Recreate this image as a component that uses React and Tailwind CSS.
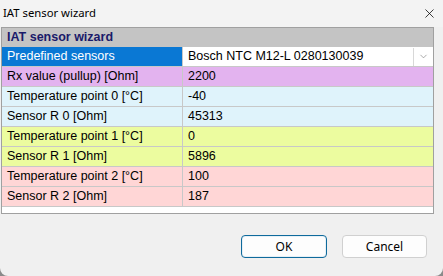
import { ChevronDown, X } from 'lucide-react'

const rows = [
    { label: 'Rx value (pullup) [Ohm]', value: '2200', bg: 'bg-[#e3b3ef]' },
    { label: 'Temperature point 0 [°C]', value: '-40', bg: 'bg-[#dff3fb]' },
    { label: 'Sensor R 0 [Ohm]', value: '45313', bg: 'bg-[#dff3fb]' },
    { label: 'Temperature point 1 [°C]', value: '0', bg: 'bg-[#ecfc9f]' },
    { label: 'Sensor R 1 [Ohm]', value: '5896', bg: 'bg-[#ecfc9f]' },
    { label: 'Temperature point 2 [°C]', value: '100', bg: 'bg-[#ffd6d6]' },
    { label: 'Sensor R 2 [Ohm]', value: '187', bg: 'bg-[#ffd6d6]' },
]

const App = () => {
    return (
        <div className="w-[443px] h-[276px] bg-[#8a8a8a] overflow-hidden">
            <div className="w-full h-full bg-[#f0f0f0] rounded-b-[8px] flex flex-col">

                {/* title bar */}
                <div className="h-[27px] flex items-center justify-between pl-[3px] pr-[6px] bg-[#f3f3f3]">
                    <span className="text-[11.3px] text-black font-['Noto_Sans',sans-serif]">IAT sensor wizard</span>
                    <X size={15} strokeWidth={1.2} className="text-black" />
                </div>

                {/* grid */}
                <div className="mx-[1px] w-[433px] h-[187px] border border-[#a0a0a0] bg-white font-['Liberation_Sans',sans-serif] text-[12.5px] text-black">
                    <div className="h-[19px] bg-[#c4c4c4] flex items-center pl-[5px] font-bold text-[#1a1a6a]">
                        IAT sensor wizard
                    </div>

                    <div className="h-[20px] flex border-b border-[#c8c8c8]">
                        <div className="w-[180px] bg-[#0a78d4] text-white flex items-center pl-[5px]">Predefined sensors</div>
                        <div className="flex-1 flex items-center border-l border-[#c8c8c8] bg-white">
                            <span className="flex-1 pl-[5px]">Bosch NTC M12-L 0280130039</span>
                            <div className="w-[19px] h-[18px] mr-[1px] border-l border-[#d8d8d8] flex items-center justify-center">
                                <ChevronDown size={11} strokeWidth={1.2} className="text-[#666]" />
                            </div>
                        </div>
                    </div>

                    {rows.map((r) => (
                        <div key={r.label} className={`h-[20px] flex border-b border-[#c8c8c8] ${r.bg}`}>
                            <div className="w-[180px] flex items-center pl-[5px]">{r.label}</div>
                            <div className="flex-1 flex items-center pl-[5px] border-l border-[#c8c8c8]">{r.value}</div>
                        </div>
                    ))}
                </div>

                {/* buttons */}
                <div className="flex justify-end gap-[15px] pr-[16px] mt-[21px] font-['Noto_Sans',sans-serif] text-[12px] text-black">
                    <button className="w-[86px] h-[23px] rounded-[4px] bg-[#fdfdfd] border border-[#0f6a9c] shadow-[inset_0_0_0_1px_#e6f0f6]">OK</button>
                    <button className="w-[85px] h-[23px] rounded-[4px] bg-[#fdfdfd] border border-[#d0d0d0]">Cancel</button>
                </div>
            </div>
        </div>
    )
}

export default App
